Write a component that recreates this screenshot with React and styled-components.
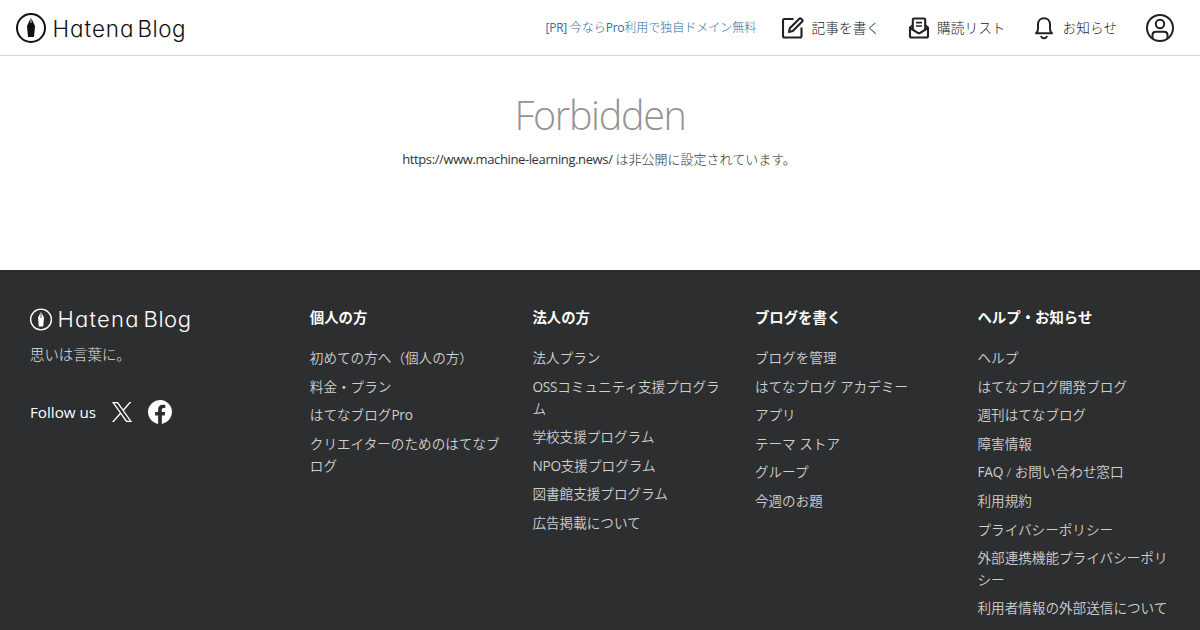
import React from 'react';
import styled, {createGlobalStyle, css} from 'styled-components';

const textFont = css`
    font-family: "Open Sans", "Noto Sans CJK JP", sans-serif;
`;

const GlobalStyle = createGlobalStyle`
    * {
        box-sizing: border-box;
    }

    body {
        margin: 0;
        background: #fff;
        overflow: hidden;
        ${textFont}
    }
`;

const Page = styled.div`
    height: 630px;
    overflow: hidden;
    display: flex;
    flex-direction: column;
`;

const Header = styled.header`
    flex: none;
    height: 56px;
    display: flex;
    align-items: center;
    justify-content: space-between;
    padding: 0 25px 0 15px;
    border-bottom: 1px solid #d3d4d5;
`;

const HeaderMenu = styled.nav`
    display: flex;
    align-items: center;
`;

const PrLink = styled.a`
    width: 211px;
    margin-right: 24px;
    padding-bottom: 1px;
    font-size: 12px;
    font-weight: 300;
    color: #2a6ea8;
    white-space: nowrap;
`;

const MenuItem = styled.a`
    display: flex;
    align-items: center;
    gap: ${props => props.gap || 7}px;
    margin-right: 28px;
    font-size: 13.7px;
    font-weight: 300;
    color: #222;
    white-space: nowrap;
`;

const MenuLabel = styled.span`
    padding-bottom: 2px;
`;

const Latin = styled.span`
    white-space: pre;
    font-weight: 400;
    letter-spacing: ${props => props.tracking || 0}px;
`;

const Main = styled.main`
    flex: none;
    height: 214px;
    padding-top: 31px;
    text-align: center;
`;

const Title = styled.h1`
    margin: 0;
    height: 56px;
    font-size: 39.5px;
    line-height: 56px;
    font-weight: 300;
    letter-spacing: -1.3px;
    color: #949494;
`;

const Message = styled.p`
    margin: 6px 0 0;
    padding-right: 2px;
    font-size: 13px;
    line-height: 21px;
    font-weight: 300;
    color: #333;
`;

const Footer = styled.footer`
    flex: 1;
    display: flex;
    padding: 36px 0 0 30px;
    background: #2d2e30;
    color: #fff;
`;

const Brand = styled.div`
    width: 280px;
`;

const Tagline = styled.p`
    margin: 10px 0 0;
    font-size: 14.4px;
    line-height: 22px;
    font-weight: 300;
    color: #e2e2e2;
`;

const Follow = styled.div`
    display: flex;
    align-items: center;
    height: 26px;
    margin-top: 33px;
    font-size: 15.2px;
`;

const FollowLabel = styled.span`
    width: 81px;
    padding-bottom: 1px;
`;

const Column = styled.section`
    width: 222.67px;
    padding-right: 26px;
`;

const ColumnTitle = styled.h2`
    margin: 0 0 18.2px;
    font-size: 14.4px;
    line-height: 23px;
    font-weight: 700;
`;

const LinkList = styled.ul`
    margin: 0;
    padding: 0;
    list-style: none;
`;

const LinkItem = styled.li`
    margin-bottom: 6.8px;
    font-size: 13.6px;
    line-height: 21.76px;
    font-weight: 350;
    color: #cfcfcf;
    word-break: break-all;
`;

const Drawing = styled.svg`
    display: block;
    flex: none;
`;

const LogoText = styled.text`
    font-family: Inter, sans-serif;
    font-feature-settings: "cv11";
    font-weight: 350;
`;

function HeaderLogo() {
    return (
        <Drawing width="176" height="40" viewBox="0 0 176 40">
            <circle cx="16" cy="20" r="14" fill="none" stroke="#111" strokeWidth="2"/>
            <path d="M16 9.5 L12 18 L13 29 H19 L20 18 Z" fill="#111"/>
            <path d="M16 9 V15" stroke="#fff" strokeWidth="0.8"/>
            <LogoText x="37.5" y="28.5" fontSize="22.4" fill="#111" textLength="81">Hatena</LogoText>
            <LogoText x="122.5" y="28.5" fontSize="22.4" fill="#111" textLength="48">Blog</LogoText>
        </Drawing>
    );
}

function FooterLogo() {
    return (
        <Drawing width="165" height="28" viewBox="0 0 165 28">
            <circle cx="11" cy="13.5" r="10.4" fill="none" stroke="#fff" strokeWidth="1.4"/>
            <path d="M11 5.8 L8 11.5 L8.8 20.5 H13.2 L14 11.5 Z" fill="#fff"/>
            <path d="M11 5 V12" stroke="#2d2e30" strokeWidth="0.8"/>
            <LogoText x="27.5" y="21" fontSize="22" fill="#fff" textLength="81">Hatena</LogoText>
            <LogoText x="113.5" y="21" fontSize="22" fill="#fff" textLength="47.5">Blog</LogoText>
        </Drawing>
    );
}

function WriteIcon() {
    return (
        <Drawing width="24" height="24" viewBox="0 0 24 24" fill="none" stroke="#222" strokeWidth="2.1" strokeLinejoin="round">
            <path d="M12.5 3 H3.5 Q2 3 2 4.5 V20 Q2 21.5 3.5 21.5 H19 Q20.5 21.5 20.5 20 V11.5"/>
            <path d="M8 16 L8.8 12.2 L18.3 2.7 Q19.2 1.8 20.1 2.7 L21.2 3.8 Q22.1 4.7 21.2 5.6 L11.8 15.1 Z"/>
        </Drawing>
    );
}

function ReadingIcon() {
    return (
        <Drawing width="22" height="24" viewBox="0 0 22 24" fill="none" stroke="#222" strokeWidth="2.1" strokeLinejoin="round">
            <path d="M4.5 9.5 L2 11.5 V20 Q2 21.5 3.5 21.5 H18.5 Q20 21.5 20 20 V11.5 L17.5 9.5"/>
            <path d="M2 12 L9.8 16.8 Q11 17.5 12.2 16.8 L20 12"/>
            <path d="M4.8 13 V3.8 Q4.8 2.5 6 2.5 H16 Q17.2 2.5 17.2 3.8 V13"/>
            <path d="M8 6.6 H14 M8 10 H14" strokeWidth="1.7"/>
        </Drawing>
    );
}

function BellIcon() {
    return (
        <Drawing width="20" height="24" viewBox="0 0 20 24" fill="none" stroke="#222" strokeWidth="2" strokeLinejoin="round">
            <path d="M2 17.3 Q4 15.5 4 13 V8.5 C4 4.5 6.5 2.2 10 2.2 S16 4.5 16 8.5 V13 Q16 15.5 18 17.3 Z"/>
            <path d="M7 20 C8 23 12 23 13 20"/>
        </Drawing>
    );
}

function UserIcon() {
    return (
        <Drawing width="30" height="30" viewBox="0 0 30 30" fill="none" stroke="#222" strokeWidth="2">
            <circle cx="15" cy="15" r="13"/>
            <circle cx="15" cy="11" r="4.2"/>
            <path d="M7.5 25.5 V22 C7.5 20 9 18.8 11 18.8 H19 C21 18.8 22.5 20 22.5 22 V25.5"/>
        </Drawing>
    );
}

function XIcon() {
    return (
        <Drawing width="22" height="22" viewBox="0 0 24 24" fill="#fff">
            <path d="M14.1 10.3 22.3 1h-2l-7.1 8.1L7.6 1H1l8.6 12.2L1 23h2l7.5-8.6 6 8.6H23zm-2.7 3-.9-1.2L3.7 2.4h3l5.6 7.8.9 1.2 7.2 10.2h-3z"/>
        </Drawing>
    );
}

const FacebookDrawing = styled(Drawing)`
    margin-left: 15px;
`;

function FacebookIcon() {
    return (
        <FacebookDrawing width="24" height="24" viewBox="0 0 24 24" fill="#fff">
            <path d="M24 12a12 12 0 1 0-13.9 11.9v-8.4h-3V12h3V9.4c0-3 1.8-4.7 4.5-4.7 1.3 0 2.7.2 2.7.2v3h-1.5c-1.5 0-2 .9-2 1.9V12h3.4l-.5 3.5h-2.8v8.4A12 12 0 0 0 24 12z"/>
        </FacebookDrawing>
    );
}

const columns = [
    {
        title: '個人の方',
        links: ['初めての方へ（個人の方）', '料金・プラン', 'はてなブログPro', 'クリエイターのためのはてなブログ'],
    },
    {
        title: '法人の方',
        links: ['法人プラン', 'OSSコミュニティ支援プログラム', '学校支援プログラム', 'NPO支援プログラム', '図書館支援プログラム', '広告掲載について'],
    },
    {
        title: 'ブログを書く',
        links: ['ブログを管理', 'はてなブログ アカデミー', 'アプリ', 'テーマ ストア', 'グループ', '今週のお題'],
    },
    {
        title: 'ヘルプ・お知らせ',
        links: ['ヘルプ', 'はてなブログ開発ブログ', '週刊はてなブログ', '障害情報', 'FAQ / お問い合わせ窓口', '利用規約', 'プライバシーポリシー', '外部連携機能プライバシーポリシー', '利用者情報の外部送信について'],
    },
];

// Latin runs are set slightly tighter than the Japanese around them
function MixedText({text}) {
    return text.split(/([A-Za-z]+)/).map((part, i) => (
        /^[A-Za-z]/.test(part) ? <Latin key={i} tracking={-0.2}>{part}</Latin> : part
    ));
}

export default function App() {
    return (
        <Page>
            <GlobalStyle/>
            <Header>
                <HeaderLogo/>
                <HeaderMenu>
                    <PrLink><Latin tracking={-0.3}>[PR] </Latin>今なら<Latin tracking={-0.3}>Pro</Latin>利用で独自ドメイン無料</PrLink>
                    <MenuItem><WriteIcon/><MenuLabel>記事を書く</MenuLabel></MenuItem>
                    <MenuItem><ReadingIcon/><MenuLabel>購読リスト</MenuLabel></MenuItem>
                    <MenuItem gap={9}><BellIcon/><MenuLabel>お知らせ</MenuLabel></MenuItem>
                    <UserIcon/>
                </HeaderMenu>
            </Header>
            <Main>
                <Title>Forbidden</Title>
                <Message><Latin tracking={-0.38}>https://www.machine-learning.news/ </Latin>は非公開に設定されています。</Message>
            </Main>
            <Footer>
                <Brand>
                    <FooterLogo/>
                    <Tagline>思いは言葉に。</Tagline>
                    <Follow>
                        <FollowLabel>Follow us</FollowLabel>
                        <XIcon/>
                        <FacebookIcon/>
                    </Follow>
                </Brand>
                {columns.map(({title, links}) => (
                    <Column key={title}>
                        <ColumnTitle>{title}</ColumnTitle>
                        <LinkList>
                            {links.map(link => <LinkItem key={link}><MixedText text={link}/></LinkItem>)}
                        </LinkList>
                    </Column>
                ))}
            </Footer>
        </Page>
    );
}
